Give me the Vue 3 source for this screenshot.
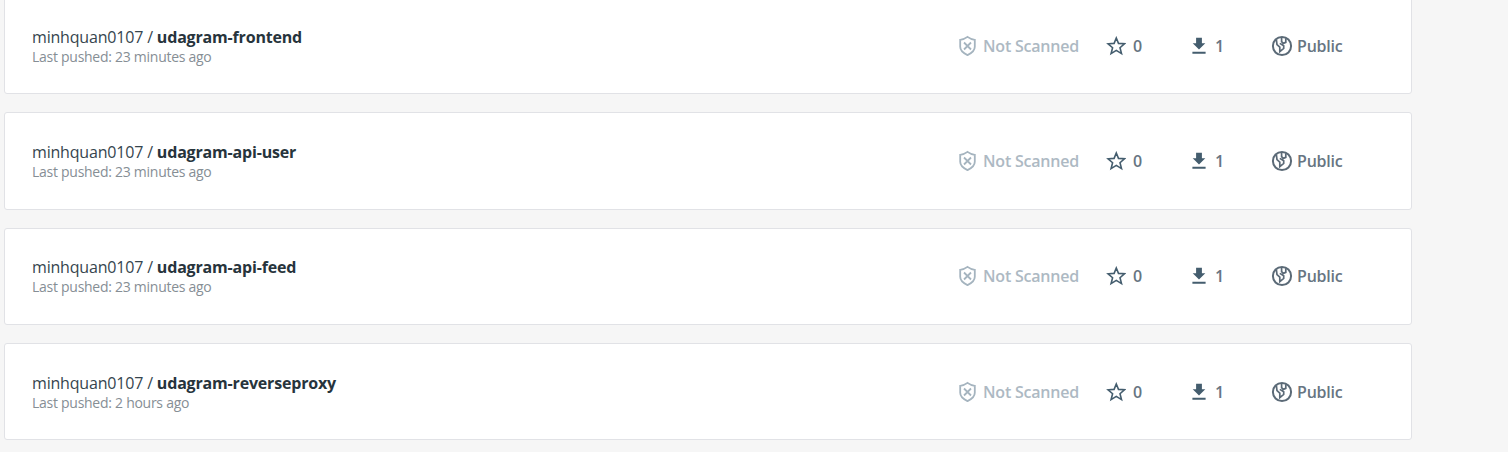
<script setup>
const repositories = [
  { owner: 'minhquan0107', name: 'udagram-frontend', pushed: '23 minutes ago' },
  { owner: 'minhquan0107', name: 'udagram-api-user', pushed: '23 minutes ago' },
  { owner: 'minhquan0107', name: 'udagram-api-feed', pushed: '23 minutes ago' },
  { owner: 'minhquan0107', name: 'udagram-reverseproxy', pushed: '2 hours ago' },
]
</script>

<template>
  <main class="list">
    <article v-for="repo in repositories" :key="repo.name" class="card">
      <div class="info">
        <div class="title">{{ repo.owner }} / <strong>{{ repo.name }}</strong></div>
        <div class="pushed">Last pushed: {{ repo.pushed }}</div>
      </div>
      <div class="stat scan">
        <svg width="20" height="22" viewBox="0 0 20 22" fill="none" stroke="currentColor" stroke-width="1.8">
          <path d="M10.5 1.9 Q13.6 4.3 17.8 4.8 V11.8 C17.8 15.8 14.5 18.3 10.5 20.1 C6.5 18.3 3.2 15.8 3.2 11.8 V4.8 Q7.4 4.3 10.5 1.9 Z" />
          <path d="M7 7.5 L14 14.5 M14 7.5 L7 14.5" />
        </svg>
        <span>Not Scanned</span>
      </div>
      <div class="stat stars">
        <svg width="20" height="20" viewBox="0 0 20 20" fill="none" stroke="currentColor" stroke-width="1.6">
          <path d="M10.3 2 L12.5 7.4 L18.5 7.8 L14 11.7 L15.5 17.6 L10.3 14.4 L5.1 17.6 L6.6 11.7 L2.1 7.8 L8.1 7.4 Z" />
        </svg>
        <span>0</span>
      </div>
      <div class="stat pulls">
        <svg width="14" height="18" viewBox="0 0 14 18" fill="currentColor">
          <path d="M4.1 .8 H9.9 V6.2 H13.3 L7 12.4 L.7 6.2 H4.1 Z M.4 14.7 H13.6 V16.7 H.4 Z" />
        </svg>
        <span>1</span>
      </div>
      <div class="stat visibility">
        <svg width="22" height="22" viewBox="0 0 22 22" fill="none" stroke="currentColor" stroke-width="2">
          <circle cx="11" cy="11" r="9.1" />
          <path d="M5.4 4.8 L6 9.6 L8.8 12.2 V16.6 L12.7 13.4 V10.8 L8.8 8.4 M10.6 2.2 V6.6 L12.2 8.4 L14.8 7.4 V3.2" stroke-width="1.7" />
        </svg>
        <span>Public</span>
      </div>
    </article>
  </main>
</template>

<style>
body {
  background: #f6f6f6;
}
</style>

<style scoped>
.list {
  box-sizing: border-box;
  height: 452px;
  margin-top: -3px;
  padding-left: 4px;
  display: flex;
  flex-direction: column;
  gap: 18px;
  font-family: "Open Sans", "Noto Sans", sans-serif;
}
.card {
  box-sizing: border-box;
  width: 1408px;
  height: 97.35px;
  flex: none;
  display: flex;
  align-items: center;
  padding-left: 27px;
  background: #fff;
  border: 1px solid #e1e2e6;
  border-radius: 3px;
}
.info {
  width: 925px;
  padding-top: 1px;
  white-space: nowrap;
}
.title {
  font-size: 16px;
  letter-spacing: -0.18px;
  line-height: 20px;
  color: #36454e;
}
.title strong {
  font-weight: 700;
  color: #27343c;
}
.pushed {
  font-size: 14px;
  letter-spacing: -0.27px;
  line-height: 19px;
  color: #868e95;
}
.stat {
  display: flex;
  align-items: center;
  font-size: 16px;
  letter-spacing: -0.21px;
  font-weight: 600;
  line-height: 22px;
  color: #677582;
  white-space: nowrap;
}
.stat svg {
  flex: none;
  color: #445d6e;
}
.scan {
  width: 149px;
  gap: 6px;
  color: #adb9c3;
}
.scan svg {
  color: #a5b4bf;
}
.stars {
  width: 86px;
  gap: 7px;
}
.pulls {
  width: 79px;
  gap: 9px;
}
.visibility {
  gap: 4px;
}
.visibility svg {
  color: #5b6a77;
}
</style>
